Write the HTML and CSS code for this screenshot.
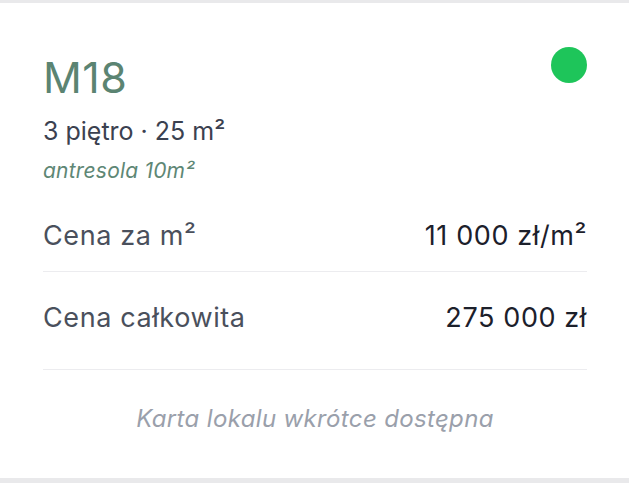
FILE: index.html
```html
<!DOCTYPE html>
<html lang="pl">
<head>
    <meta charset="UTF-8">
    <meta name="viewport" content="width=device-width, initial-scale=1.0">
    <title>M18</title>
    <link rel="stylesheet" href="styles.css">
</head>
<body>
    <div class="card">
        <div class="card-head">
            <div class="unit">
                <h1 class="unit-name">M18</h1>
                <p class="unit-info">3 piętro · 25 m²</p>
                <p class="unit-extra">antresola 10m²</p>
            </div>
            <span class="status-dot"></span>
        </div>
        <div class="price-row first">
            <span class="price-label">Cena za m²</span>
            <span class="price-value">11 000 zł/m²</span>
        </div>
        <div class="price-row">
            <span class="price-label">Cena całkowita</span>
            <span class="price-value">275 000 zł</span>
        </div>
        <p class="card-note">Karta lokalu wkrótce dostępna</p>
    </div>
</body>
</html>
```

FILE: styles.css
```css
* {
    margin: 0;
    padding: 0;
    box-sizing: border-box;
    font-family: Inter, Roboto, "Liberation Sans", sans-serif;
}
body {
    width: 629px;
    height: 483px;
    background-color: #e9e9eb;
    padding: 3px 0 5px 0;
}
.card {
    height: 100%;
    background-color: #fff;
    padding: 44px 42px 0 43px;
}
.card-head {
    display: flex;
    justify-content: space-between;
    align-items: flex-start;
}
.unit {
    padding-top: 6px;
}
.unit-name {
    font-size: 43px;
    font-weight: 400;
    line-height: 48px;
    letter-spacing: 0.5px;
    color: #5b8472;
}
.unit-info {
    margin-top: 15px;
    font-size: 25px;
    line-height: 30px;
    color: #3b4150;
}
.unit-extra {
    margin-top: 12px;
    font-size: 21px;
    line-height: 26px;
    letter-spacing: 0.2px;
    font-style: italic;
    color: #5e8775;
}
.status-dot {
    width: 36px;
    height: 36px;
    border-radius: 50%;
    background-color: #1ec55a;
}
.price-row {
    display: flex;
    justify-content: space-between;
    padding: 30px 0 35px 0;
    border-bottom: 1px solid #ececef;
    font-size: 27px;
    line-height: 32px;
    letter-spacing: 0.6px;
}
.price-row.first {
    padding: 36px 0 19px 0;
}
.price-label {
    color: #4a505c;
}
.price-value {
    color: #1c202b;
}
.card-note {
    margin-top: 35px;
    text-align: center;
    font-size: 24px;
    line-height: 28px;
    letter-spacing: 0.35px;
    font-style: italic;
    color: #9aa0ab;
}
```
